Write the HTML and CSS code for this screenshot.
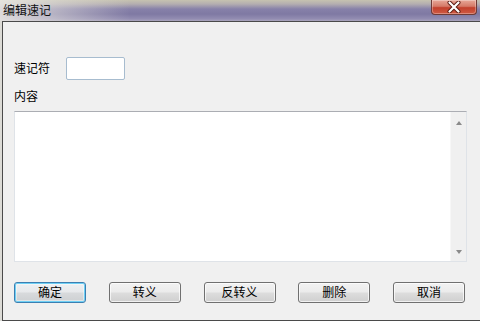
FILE: index.html
```html
<!DOCTYPE html>
<html lang="zh">
<head>
<meta charset="utf-8">
<link rel="stylesheet" href="styles.css">
</head>
<body>
<div class="window">
  <div class="titlebar">
    <span class="title">编辑速记</span>
    <div class="close">
      <svg width="18" height="12" viewBox="0 0 18 12">
        <path d="M4.5 1.5 L13.5 10.5 M13.5 1.5 L4.5 10.5" stroke="#5a1a12" stroke-width="4" stroke-linecap="round"/>
        <path d="M4.5 1.5 L13.5 10.5 M13.5 1.5 L4.5 10.5" stroke="#ffffff" stroke-width="2.2" stroke-linecap="round"/>
      </svg>
    </div>
  </div>
  <div class="client">
    <div class="row-shortcut">
      <span class="label">速记符</span>
      <div class="input"></div>
    </div>
    <div class="label content-label">内容</div>
    <div class="textarea">
      <div class="text"></div>
      <div class="scrollbar">
        <span class="arrow up"></span>
        <span class="arrow down"></span>
      </div>
    </div>
    <div class="buttons">
      <div class="btn default">确定</div>
      <div class="btn">转义</div>
      <div class="btn">反转义</div>
      <div class="btn">删除</div>
      <div class="btn">取消</div>
    </div>
  </div>
</div>
</body>
</html>
```
FILE: styles.css
```css
html, body {
  margin: 0;
  padding: 0;
}
body {
  width: 480px;
  height: 321px;
  overflow: hidden;
  font-family: "Noto Sans CJK SC", "Noto Sans", sans-serif;
  font-size: 12px;
  color: #000;
}
.window {
  width: 480px;
  height: 321px;
  background: linear-gradient(to right, #dcdbd6 0, #d2d0cc 40%, #c9c6d3 100%);
  display: flex;
  flex-direction: column;
}
.titlebar {
  height: 23px;
  position: relative;
  display: flex;
  align-items: flex-start;
  background:
    linear-gradient(to right, rgba(236,234,228,0.85) 0, rgba(226,224,220,0.5) 60px, rgba(200,198,210,0) 130px),
    linear-gradient(to bottom, #c6c2b0 0, #b4aeb0 4px, #8781a9 9px, #7f79a3 14px, #938db2 19px, #c2bec6 23px);
}
.title {
  margin-left: 3px;
  margin-top: 2px;
  line-height: 16px;
  font-size: 12px;
  color: #111;
}
.close {
  position: absolute;
  left: 431px;
  top: 0;
  width: 44px;
  height: 14px;
  border: 1px solid #6e3a36;
  border-top: none;
  border-radius: 0 0 4px 4px;
  background: linear-gradient(to bottom, #e8a898 0, #d57a68 45%, #c2402c 55%, #cf5a44 100%);
  display: flex;
  align-items: center;
  justify-content: center;
  box-shadow: inset 0 0 0 1px rgba(255,255,255,0.3);
}
.close svg {
  display: block;
}
.client {
  margin-left: 2px;
  width: 472px;
  height: 293px;
  border: 1px solid #4a4a4a;
  background: #f0f0f0;
  display: flex;
  flex-direction: column;
  padding: 35px 0 0 11px;
  box-sizing: content-box;
}
.row-shortcut {
  display: flex;
  align-items: center;
  height: 23px;
}
.label {
  line-height: 14px;
}
.input {
  margin-left: 16px;
  width: 57px;
  height: 21px;
  border: 1px solid #a7bccf;
  border-radius: 2px;
  background: #fff;
}
.content-label {
  margin-top: 9px;
}
.textarea {
  margin-top: 8px;
  width: 451px;
  height: 149px;
  border: 1px solid #dfe3e8;
  border-top-color: #abadb3;
  background: #fff;
  display: flex;
}
.text {
  flex: 1;
}
.scrollbar {
  width: 16px;
  background: #f0f0f0;
  border-left: 1px solid #f7f7f7;
  display: flex;
  flex-direction: column;
  justify-content: space-between;
  align-items: center;
  padding: 9px 0 7px;
  box-sizing: border-box;
}
.arrow {
  width: 0;
  height: 0;
  border-left: 3.5px solid transparent;
  border-right: 3.5px solid transparent;
}
.arrow.up {
  border-bottom: 4px solid #8a8a8a;
}
.arrow.down {
  border-top: 4px solid #8a8a8a;
}
.buttons {
  margin-top: 20px;
  width: 451px;
  display: flex;
  justify-content: space-between;
}
.btn {
  width: 70px;
  height: 19px;
  border: 1px solid #707070;
  border-radius: 3px;
  background: linear-gradient(to bottom, #f2f2f2 0, #ebebeb 48%, #dddddd 52%, #cfcfcf 100%);
  box-shadow: inset 0 0 0 1px rgba(255,255,255,0.7);
  display: flex;
  align-items: center;
  justify-content: center;
  line-height: 14px;
}
.btn.default {
  border-color: #3c7fb1;
  box-shadow: inset 0 0 0 1px #6fd0f5, inset 0 0 0 2px rgba(255,255,255,0.4);
  background: linear-gradient(to bottom, #eef0f2 0, #e7e9eb 48%, #d8dadc 52%, #cdd0d2 100%);
}
```
